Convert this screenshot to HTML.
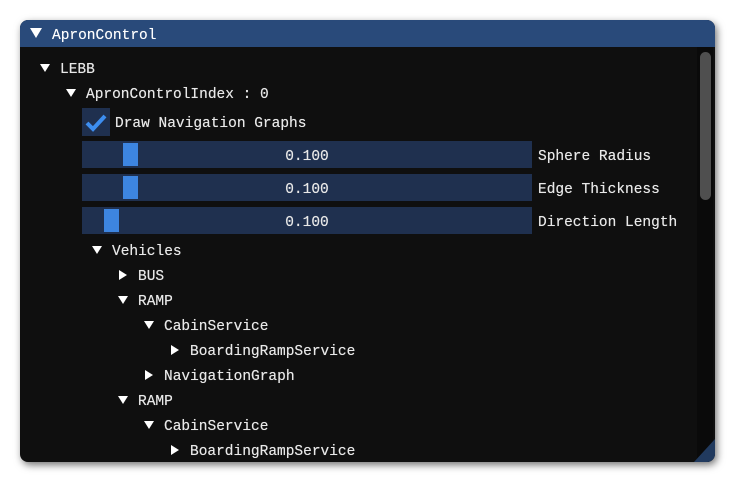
<!DOCTYPE html>
<html><head><style>
body{margin:0;width:735px;height:482px;background:#fff;position:relative;overflow:hidden;font-family:"Liberation Mono",monospace;font-size:14.5px;color:#e8e8e8}
.win{position:absolute;left:20px;top:20px;width:695px;height:442px;background:#0f0f0f;border-radius:8px;box-shadow:2px 3px 8px rgba(0,0,0,.55);overflow:hidden}
.title{position:absolute;left:0;top:0;right:0;height:27px;background:#294a7a}
.t{position:absolute;white-space:pre;line-height:16px;margin-top:2px;text-shadow:0 0 0.4px #e8e8e8}
.a{position:absolute}
.sl{position:absolute;left:62px;width:450px;height:27px;background:#1f304f}
.g{position:absolute;top:2px;width:15px;height:23px;background:#3d85e0}
.v{position:absolute;left:0;width:450px;text-align:center;top:6px}
</style></head><body>
<div class="win">
<div class="title"></div>
<svg class="a" style="left:10px;top:8px" width="12" height="10"><path d="M0 0H12L6 10Z" fill="#fff"/></svg>
<div class="t" style="left:32px;top:6px;color:#fff">ApronControl</div>
<div class="a" style="left:677px;top:27px;width:16px;height:415px;background:#0a0a0a"></div>
<div class="a" style="left:680px;top:32px;width:11px;height:148px;background:#4f4f4f;border-radius:6px"></div>
<svg class="a" style="left:674px;top:419px" width="21" height="23"><path d="M21 0V23H0Z" fill="#213a5e"/></svg>

<svg class="a" style="left:20px;top:44px" width="10" height="8"><path d="M0 0H10L5 8Z" fill="#fff"/></svg>
<div class="t" style="left:40px;top:40px">LEBB</div>
<svg class="a" style="left:46px;top:69px" width="10" height="8"><path d="M0 0H10L5 8Z" fill="#fff"/></svg>
<div class="t" style="left:66px;top:65px">ApronControlIndex : 0</div>

<div class="a" style="left:62px;top:88px;width:28px;height:28px;background:#1f304f"></div>
<svg class="a" style="left:62px;top:88px" width="28" height="28"><path d="M5 15L11 21L23 8" stroke="#3d8ef0" stroke-width="4" fill="none"/></svg>
<div class="t" style="left:95px;top:94px">Draw Navigation Graphs</div>

<div class="sl" style="top:121px"><div class="g" style="left:41px"></div><div class="t v">0.100</div></div>
<div class="t" style="left:518px;top:127px">Sphere Radius</div>
<div class="sl" style="top:154px"><div class="g" style="left:41px"></div><div class="t v">0.100</div></div>
<div class="t" style="left:518px;top:160px">Edge Thickness</div>
<div class="sl" style="top:187px"><div class="g" style="left:22px"></div><div class="t v">0.100</div></div>
<div class="t" style="left:518px;top:193px">Direction Length</div>

<svg class="a" style="left:72px;top:226px" width="10" height="8"><path d="M0 0H10L5 8Z" fill="#fff"/></svg>
<div class="t" style="left:92px;top:222px">Vehicles</div>
<svg class="a" style="left:99px;top:250px" width="8" height="10"><path d="M0 0V10L8 5Z" fill="#fff"/></svg>
<div class="t" style="left:118px;top:247px">BUS</div>
<svg class="a" style="left:98px;top:276px" width="10" height="8"><path d="M0 0H10L5 8Z" fill="#fff"/></svg>
<div class="t" style="left:118px;top:272px">RAMP</div>
<svg class="a" style="left:124px;top:301px" width="10" height="8"><path d="M0 0H10L5 8Z" fill="#fff"/></svg>
<div class="t" style="left:144px;top:297px">CabinService</div>
<svg class="a" style="left:151px;top:325px" width="8" height="10"><path d="M0 0V10L8 5Z" fill="#fff"/></svg>
<div class="t" style="left:170px;top:322px">BoardingRampService</div>
<svg class="a" style="left:125px;top:350px" width="8" height="10"><path d="M0 0V10L8 5Z" fill="#fff"/></svg>
<div class="t" style="left:144px;top:347px">NavigationGraph</div>
<svg class="a" style="left:98px;top:376px" width="10" height="8"><path d="M0 0H10L5 8Z" fill="#fff"/></svg>
<div class="t" style="left:118px;top:372px">RAMP</div>
<svg class="a" style="left:124px;top:401px" width="10" height="8"><path d="M0 0H10L5 8Z" fill="#fff"/></svg>
<div class="t" style="left:144px;top:397px">CabinService</div>
<svg class="a" style="left:151px;top:425px" width="8" height="10"><path d="M0 0V10L8 5Z" fill="#fff"/></svg>
<div class="t" style="left:170px;top:422px">BoardingRampService</div>
</div>
</body></html>
